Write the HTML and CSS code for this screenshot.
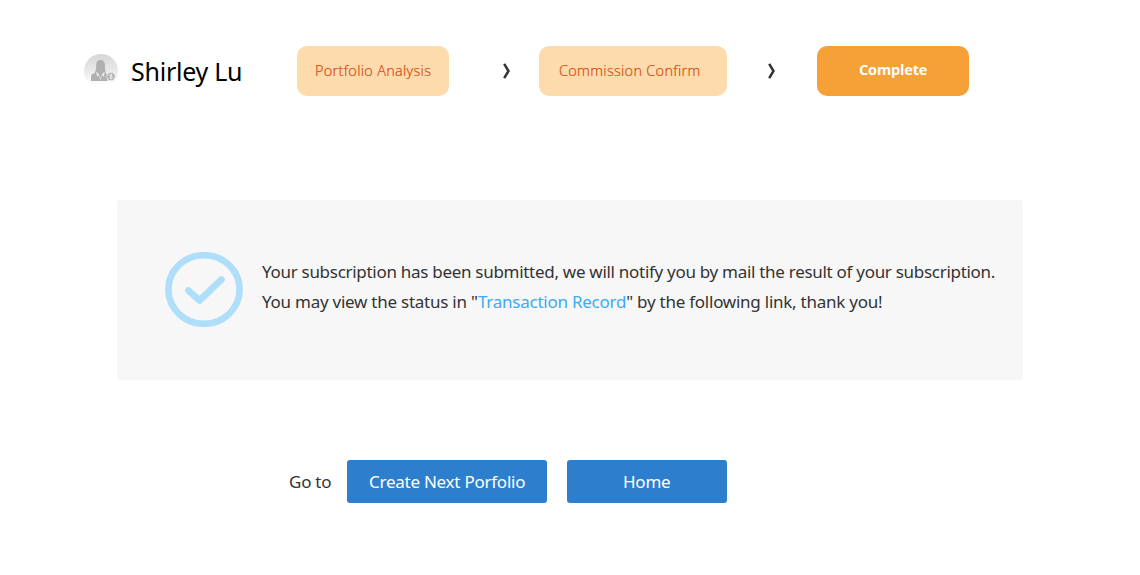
FILE: index.html
```html
<!DOCTYPE html>
<html lang="en">
<head>
<meta charset="utf-8">
<title>Subscription Complete</title>
<link rel="stylesheet" href="styles.css">
</head>
<body>
<header class="header">
  <svg class="avatar" viewBox="0 0 34 34" aria-hidden="true">
    <defs>
      <linearGradient id="fade" x1="0" y1="0" x2="0" y2="1">
        <stop offset="0" stop-color="#d6d6d6"/>
        <stop offset=".5" stop-color="#e9e9e9"/>
        <stop offset=".92" stop-color="#fff"/>
      </linearGradient>
    </defs>
    <circle cx="17" cy="17" r="17" fill="url(#fade)"/>
    <path fill="#b0b0b0" d="M16.500 6c-3 0-4.300 2.300-4.300 5 0 3.500-.4 5.500-1.400 8l-2.600 1.100C7.200 20.700 7 22 7 27h16.500v-5.500l-1.300-2c-1-2.500-1.300-5-1.300-8.500C20.900 8.300 19.600 6 16.500 6z"/>
    <path fill="#ececec" d="M12.200 17.800l1.900 1.200 2.400 5.500 2.400-5.500 1.900-1.200-.9 4.700-1.500-.9-1.900 4.300-1.900-4.300-1.500.9z"/>
    <circle cx="27" cy="22.500" r="4.200" fill="#b0b0b0" stroke="#f0f0f0" stroke-width=".8"/>
    <path fill="none" stroke="#f4f4f4" stroke-width=".9" d="M28.600 21.200c-.8-.9-3.100-.8-3.100.3s3.200.8 3.200 2-2.500 1.200-3.300.2M27.100 19.700v5.600"/>
  </svg>
  <h1 class="name">Shirley Lu</h1>
  <div class="step">Portfolio Analysis</div>
  <svg class="chevron" viewBox="0 0 8 16"><path d="M1.200 .8L5.500 8 1.200 15.200"/></svg>
  <div class="step step-wide">Commission Confirm</div>
  <svg class="chevron chevron-last" viewBox="0 0 8 16"><path d="M1.200 .8L5.500 8 1.200 15.200"/></svg>
  <div class="step step-active">Complete</div>
</header>
<main>
  <section class="notice">
    <svg class="check" viewBox="0 0 78 75">
      <ellipse cx="39" cy="37.500" rx="35.600" ry="34.300"/>
      <path d="M23.500 38.500L34.500 48.500 56.500 27.500"/>
    </svg>
    <div class="message">
      <p class="line line-first">Your subscription has been submitted, we will notify you by mail the result of your subscription.</p>
      <p class="line">You may view the status in "<a class="link">Transaction Record</a>" by the following link, thank you!</p>
    </div>
  </section>
  <nav class="actions">
    <span class="goto">Go to</span>
    <a class="button button-create">Create Next Porfolio</a>
    <a class="button button-home">Home</a>
  </nav>
</main>
</body>
</html>
```
FILE: styles.css
```css
* { box-sizing: border-box; }
body {
  margin: 0;
  background: #fff;
  color: #333;
  font-family: "Noto Sans", "Open Sans", sans-serif;
  white-space: nowrap;
}
.header {
  display: flex;
  align-items: center;
  height: 50px;
  margin: 46px 0 0 84px;
}
.avatar { width: 34px; height: 34px; flex: none; }
.name {
  width: 166px;
  margin: 0 0 0 13px;
  color: #000;
  font-size: 25px;
  font-weight: 400;
  letter-spacing: -.25px;
  line-height: 34px;
}
.step {
  width: 152px;
  height: 50px;
  flex: none;
  padding-left: 18px;
  border-radius: 10px;
  background: #fddbac;
  color: #d4460b;
  font-family: "Open Sans", sans-serif;
  font-size: 14.500px;
  font-weight: 300;
  letter-spacing: .3px;
  line-height: 50px;
  -webkit-text-stroke: .2px currentColor;
}
.step-wide { width: 188px; padding-left: 20px; }
.step-active {
  padding-left: 42px;
  background: #f6a138;
  color: #fff;
  font-weight: 700;
  letter-spacing: -.15px;
  line-height: 48px;
  -webkit-text-stroke: 0;
}
.chevron {
  width: 8px;
  height: 16px;
  flex: none;
  margin: 0 28px 0 54px;
  fill: none;
  stroke: #333;
  stroke-width: 2.500;
}
.chevron-last { margin: 0 41px; }
.notice {
  display: flex;
  align-items: flex-start;
  width: 906px;
  height: 180px;
  margin: 104px 0 0 117px;
  padding: 52px 0 0 48px;
  border-radius: 3px;
  background: #f7f7f7;
}
.check {
  width: 78px;
  height: 75px;
  flex: none;
  fill: none;
  stroke: #aedef9;
  stroke-width: 6.600;
  stroke-linecap: round;
  stroke-linejoin: round;
}
.message { margin: 5px 0 0 19px; }
.line {
  margin: 0;
  font-size: 17px;
  letter-spacing: -.245px;
  line-height: 30px;
}
.line-first { letter-spacing: -.29px; }
.link { color: #3daaf5; }
.actions {
  display: flex;
  align-items: center;
  height: 43px;
  margin: 80px 0 0 289px;
  font-size: 17px;
  letter-spacing: -.25px;
}
.goto { width: 58px; }
.button {
  height: 43px;
  border-radius: 3px;
  background: #2d7fce;
  color: #fff;
  line-height: 43px;
}
.button-create { width: 200px; padding-left: 22px; }
.button-home { width: 160px; margin-left: 20px; padding-left: 56px; }
```
